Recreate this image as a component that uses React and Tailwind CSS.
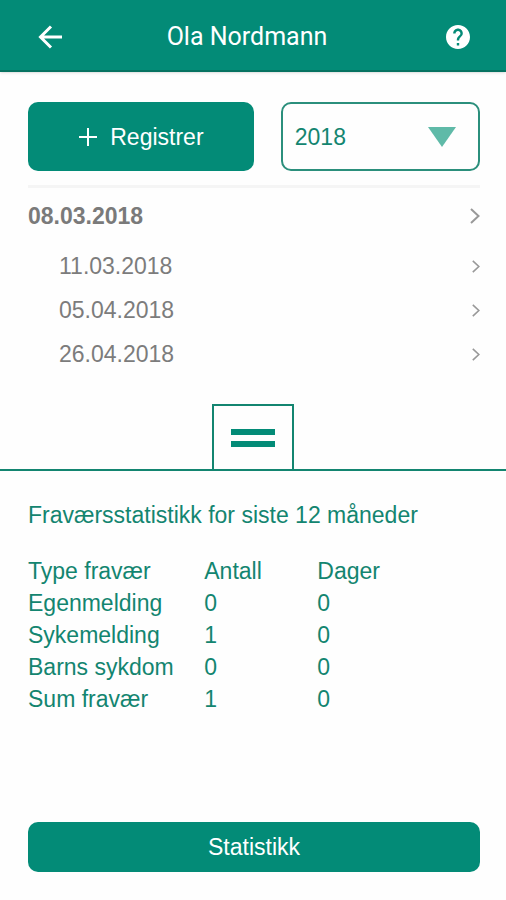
const periods = [
    { date: '08.03.2018', followUps: ['11.03.2018', '05.04.2018', '26.04.2018'] },
];

const stats = [
    { type: 'Egenmelding', count: 0, days: 0 },
    { type: 'Sykemelding', count: 1, days: 0 },
    { type: 'Barns sykdom', count: 0, days: 0 },
    { type: 'Sum fravær', count: 1, days: 0 },
];

function Chevron({ className }) {
    return (
        <svg viewBox="0 0 10 16" className={className} fill="none" stroke="#999999" strokeWidth="2" aria-hidden="true">
            <path d="M1 1l7.5 7L1 15" />
        </svg>
    );
}

function Header({ title }) {
    return (
        <header className="h-[72px] shrink-0 bg-[#038b77] border-b-2 border-[#067261] shadow-sm px-9 pt-1 flex items-center justify-between text-white">
            <button type="button" aria-label="Tilbake" className="w-7 h-7">
                <svg viewBox="0 0 28 28" className="w-7 h-7" fill="none" stroke="currentColor" strokeWidth="3" aria-hidden="true">
                    <path d="M26 14H5M15 3.500L4.500 14 15 24.500" />
                </svg>
            </button>
            <h1 className="mr-4 text-[25px] leading-8 font-[Roboto,sans-serif]">{title}</h1>
            <button type="button" aria-label="Hjelp" className="w-6 h-6">
                <svg viewBox="2 2 20 20" className="w-6 h-6" fill="currentColor" aria-hidden="true">
                    <path d="M12 2C6.480 2 2 6.480 2 12s4.480 10 10 10 10-4.480 10-10S17.520 2 12 2zm1 17h-2v-2h2v2zm2.070-7.750l-.9.920C13.450 12.900 13 13.500 13 15h-2v-.5c0-1.100.450-2.100 1.170-2.830l1.240-1.260c.370-.360.590-.860.590-1.410 0-1.100-.9-2-2-2s-2 .9-2 2H8c0-2.210 1.790-4 4-4s4 1.790 4 4c0 .880-.360 1.680-.930 2.250z" />
                </svg>
            </button>
        </header>
    );
}

function Period({ date, followUps }) {
    return (
        <li>
            <a href="#" className="h-14 flex items-center justify-between font-bold text-[#7a7a7a]">
                {date}
                <Chevron className="w-[10px] h-4" />
            </a>
            <ul>
                {followUps.map((d) => (
                    <li key={d}>
                        <a href="#" className="h-11 pl-[31px] flex items-center justify-between text-[#7c7c7c]">
                            {d}
                            <Chevron className="w-2 h-[13px]" />
                        </a>
                    </li>
                ))}
            </ul>
        </li>
    );
}

function StatTable() {
    return (
        <table className="w-full table-fixed text-left leading-8">
            <thead>
                <tr>
                    <th className="w-[39%] p-0 font-normal">Type fravær</th>
                    <th className="w-1/4 p-0 font-normal">Antall</th>
                    <th className="p-0 font-normal">Dager</th>
                </tr>
            </thead>
            <tbody>
                {stats.map(({ type, count, days }) => (
                    <tr key={type}>
                        <td className="p-0">{type}</td>
                        <td className="p-0">{count}</td>
                        <td className="p-0">{days}</td>
                    </tr>
                ))}
            </tbody>
        </table>
    );
}

export default function App() {
    return (
        <div className="min-h-screen flex flex-col bg-[#fefefe] font-['Liberation_Sans',Arial,sans-serif] text-[23px] leading-8 text-[#138570]">
            <Header title="Ola Nordmann" />

            <main className="flex-1 flex flex-col">
                <div className="pl-7 pr-[26px] pt-[30px]">
                    <div className="flex gap-[27px] pb-[14px] border-b-3 border-[#f5f5f5]">
                        <button type="button" className="flex-[17] h-[69px] rounded-[10px] bg-[#038b77] text-white flex items-center justify-center gap-3">
                            <svg viewBox="0 0 20 20" className="w-5 h-5" stroke="currentColor" strokeWidth="2" aria-hidden="true">
                                <path d="M10 1v18M1 10h18" />
                            </svg>
                            Registrer
                        </button>
                        <div className="flex-[15] grid items-center">
                            <select aria-label="År" defaultValue="2018" className="col-start-1 row-start-1 w-full h-[69px] appearance-none rounded-[10px] border-2 border-[#2b8f7c] bg-transparent px-3">
                                <option>2018</option>
                                <option>2017</option>
                            </select>
                            <svg viewBox="0 0 28 20" className="col-start-1 row-start-1 justify-self-end mr-6 w-7 h-5 pointer-events-none" fill="#5fbaa8" aria-hidden="true">
                                <path d="M0 0h28L14 20z" />
                            </svg>
                        </div>
                    </div>
                    <ul>
                        {periods.map((p) => (
                            <Period key={p.date} {...p} />
                        ))}
                    </ul>
                </div>

                <div className="mt-7 border-b-2 border-[#138570] flex justify-center">
                    <button type="button" aria-label="Vis statistikk" className="w-[82px] h-[65px] border-2 border-b-0 border-[#138570] flex flex-col items-center justify-center gap-[6px]">
                        <span className="w-11 h-[6px] bg-[#038b77]" />
                        <span className="w-11 h-[6px] bg-[#038b77]" />
                    </button>
                </div>

                <section className="flex-1 flex flex-col pl-7 pr-[26px] pt-7 pb-7">
                    <h2 className="mb-6">Fraværsstatistikk for siste 12 måneder</h2>
                    <StatTable />
                    <button type="button" className="mt-auto h-[50px] rounded-[10px] bg-[#038b77] text-white">
                        Statistikk
                    </button>
                </section>
            </main>
        </div>
    );
}
